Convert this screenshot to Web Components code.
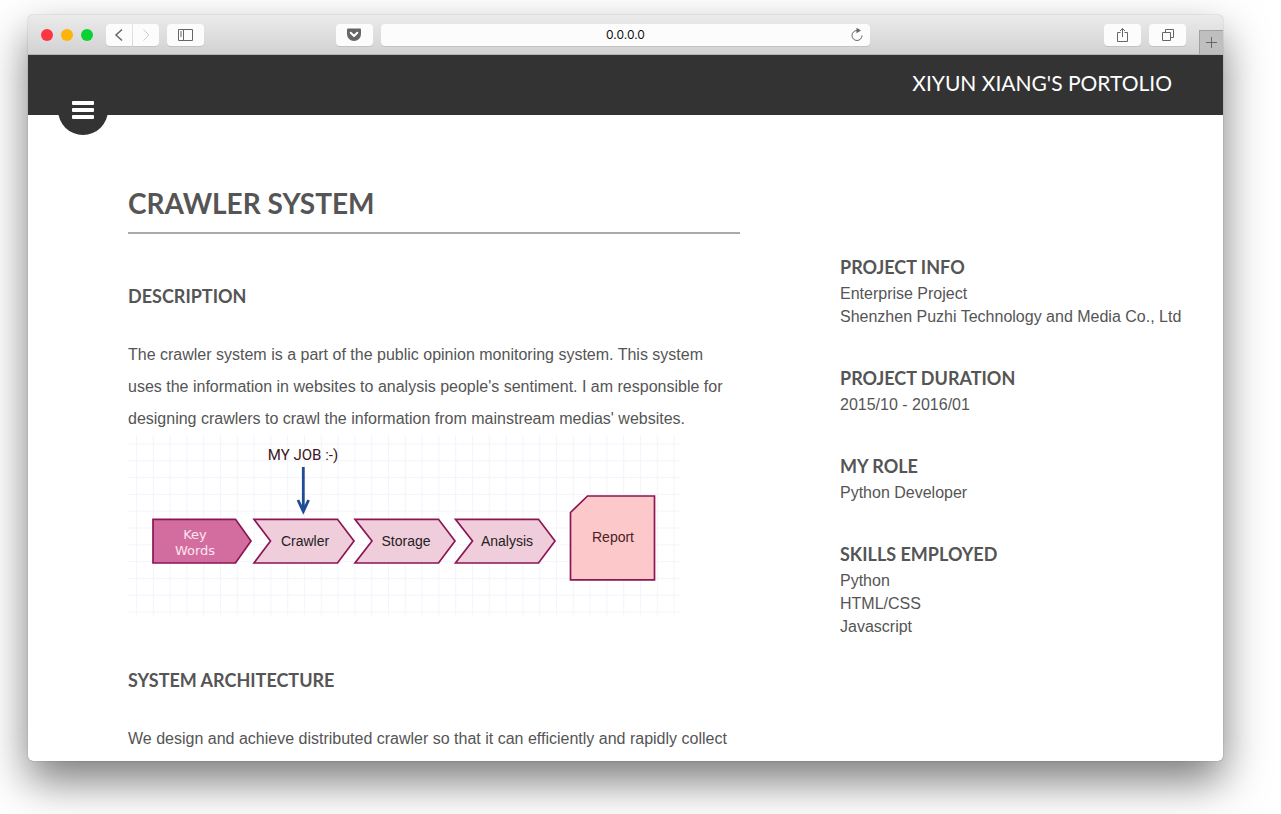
<!DOCTYPE html>
<html lang="en">
<head>
<meta charset="utf-8">
<title>Xiyun Xiang's Portolio</title>
<style>
  html, body { height: 100%; }
  body {
    margin: 0;
    background: #fff;
    color: #555;
    font: 16px/32px "Liberation Sans", Arial, sans-serif;
    overflow: hidden;
  }
</style>
</head>
<body>
<browser-window>
  <browser-toolbar slot="toolbar" address="0.0.0.0"></browser-toolbar>
  <site-header>XIYUN XIANG'S PORTOLIO</site-header>
  <project-page heading="CRAWLER SYSTEM">
    <article-section heading="DESCRIPTION">
      The crawler system is a part of the public opinion monitoring system. This system uses the information in websites to analysis people's sentiment. I am responsible for designing crawlers to crawl the information from mainstream medias' websites.
      <flow-diagram slot="figure"></flow-diagram>
    </article-section>
    <article-section heading="SYSTEM ARCHITECTURE">
      We design and achieve distributed crawler so that it can efficiently and rapidly collect
    </article-section>
    <info-group slot="aside" heading="PROJECT INFO"><div>Enterprise Project</div><div>Shenzhen Puzhi Technology and Media Co., Ltd</div></info-group>
    <info-group slot="aside" heading="PROJECT DURATION"><div>2015/10 - 2016/01</div></info-group>
    <info-group slot="aside" heading="MY ROLE"><div>Python Developer</div></info-group>
    <info-group slot="aside" heading="SKILLS EMPLOYED"><div>Python</div><div>HTML/CSS</div><div>Javascript</div></info-group>
  </project-page>
</browser-window>

<script>
class BaseElement extends HTMLElement {
  connectedCallback() {
    if (!this.shadowRoot) this.attachShadow({ mode: 'open' }).innerHTML = this.render();
  }
  attr(name) { return this.getAttribute(name) || ''; }
}

customElements.define('browser-window', class extends BaseElement {
  render() {
    return `<style>
      :host { display: flex; height: 100vh; box-sizing: border-box; padding: 15px 58px 53px 28px; }
      .frame { flex: 1; min-width: 0; display: flex; flex-direction: column; border-radius: 5px; background: #fff;
        box-shadow: 0 20px 44px rgba(0,0,0,.52), 0 0 1px rgba(0,0,0,.6); }
      .view { flex: 1; min-height: 0; overflow: hidden; border-radius: 0 0 5px 5px; }
    </style>
    <div class="frame"><slot name="toolbar"></slot><div class="view"><slot></slot></div></div>`;
  }
});

customElements.define('browser-toolbar', class extends BaseElement {
  render() {
    return `<style>
      :host { display: block; }
      .bar { display: grid; grid-template-columns: 1fr 41% 1fr; align-items: center; height: 40px; box-sizing: border-box;
        border-radius: 5px 5px 0 0; border-bottom: 1px solid #b4b4b4; background: linear-gradient(#ebebeb, #d2d2d2); }
      .left, .right, .lights, .nav { display: flex; align-items: center; }
      .left { padding: 0 8px 0 13px; }
      .lights { gap: 8px; margin-right: 13px; }
      .lights i { width: 12px; height: 12px; border-radius: 50%; }
      button { display: grid; place-items: center; width: 37px; height: 22px; padding: 0; border: 0; border-radius: 4px;
        background: #fcfcfc; box-shadow: 0 1px 0 #c2c2c2; }
      .nav { gap: 1px; margin-right: 8px; }
      .nav button { width: 26px; }
      .nav button:first-child { border-radius: 4px 0 0 4px; }
      .nav button:last-child { border-radius: 0 4px 4px 0; }
      .pocket { margin-left: auto; }
      .field { display: flex; position: relative; }
      input { width: 100%; height: 22px; box-sizing: border-box; padding: 0 26px; border: 0; border-radius: 4px; background: #fcfcfc;
        box-shadow: 0 1px 0 #c2c2c2; color: #111; text-align: center; font: 12px Inter, "Liberation Sans", sans-serif; }
      .field button { position: absolute; right: 0; top: 0; width: 26px; background: none; box-shadow: none; }
      .right { justify-content: flex-end; align-self: stretch; gap: 8px; }
      .right .add { align-self: flex-end; width: 24px; height: 24px; margin-left: 5px; border: 1px solid #a0a0a0; border-width: 1px 0 0 1px;
        border-radius: 0; background: #bfbfbf; box-shadow: none; }
      svg { display: block; fill: none; stroke: #666; }
    </style>
    <div class="bar">
      <div class="left">
        <div class="lights"><i style="background:#fc3543"></i><i style="background:#fdb40a"></i><i style="background:#0bd133"></i></div>
        <div class="nav">
          <button aria-label="Back"><svg width="10" height="14" viewBox="0 0 10 14" stroke-width="1.5"><path d="M8 1.500 2 7l6 5.500"/></svg></button>
          <button aria-label="Forward"><svg width="10" height="14" viewBox="0 0 10 14" style="stroke:#ccc"><path d="m2.500 1.500L8 7l-5.500 5.500"/></svg></button>
        </div>
        <button aria-label="Sidebar"><svg width="17" height="14" viewBox="0 0 17 14"><path d="M1.500 1.500h14v11h-14zM6.500 1.500v11M3 4h2M3 6h2M3 8h2"/></svg></button>
        <button class="pocket" aria-label="Pocket"><svg width="16" height="14" viewBox="0 0 16 14"><path d="M2 .5h12q1 0 1 1V6a7 7 0 0 1-14 0V1.500q0-1 1-1z" fill="#666" stroke="none"/><path d="M4.700 4.700 8 8l3.300-3.300" stroke="#fff" stroke-width="2" stroke-linecap="round" stroke-linejoin="round"/></svg></button>
      </div>
      <div class="field">
        <input type="text" aria-label="Address" value="${this.attr('address')}">
        <button aria-label="Reload"><svg width="14" height="16" viewBox="0 0 14 16"><path d="M8 3.500H7a5 5 0 1 0 5 5"/><path d="m6.500 .8 4.500 2.700-4.500 2.700z" fill="#666" stroke="none"/></svg></button>
      </div>
      <div class="right">
        <button aria-label="Share"><svg width="13" height="16" viewBox="0 0 13 16"><path d="M4.500 5.500h-3v9h10v-9h-3M6.500 10V1.500M4 4l2.500-2.500L9 4"/></svg></button>
        <button aria-label="Tabs"><svg width="14" height="14" viewBox="0 0 14 14"><path d="M1.500 4.500h8v8h-8zM4.500 4V1.500h8v8H10"/></svg></button>
        <button class="add" aria-label="New tab"><svg width="13" height="13" viewBox="0 0 13 13"><path d="M6.500 1v11M1 6.500h11"/></svg></button>
      </div>
    </div>`;
  }
});

customElements.define('site-header', class extends BaseElement {
  render() {
    return `<style>
      :host { display: block; position: relative; background: #333; }
      header { display: flex; align-items: center; justify-content: flex-end; height: 60px; padding: 0 51px 4px; box-sizing: border-box; }
      a { color: #fff; text-decoration: none; font: 21px/28px Lato, sans-serif; }
      button { position: absolute; left: 30px; bottom: -20px; width: 50px; height: 50px; display: grid; place-items: center;
        padding: 0; border: 0; border-radius: 50%; background: #333; }
      svg { display: block; }
    </style>
    <header>
      <button aria-label="Menu"><svg width="22" height="20" viewBox="0 0 22 20" fill="#fff"><rect y="1" width="22" height="4" rx="1"/><rect y="8" width="22" height="4" rx="1"/><rect y="15" width="22" height="4" rx="1"/></svg></button>
      <a href="#"><slot></slot></a>
    </header>`;
  }
});

customElements.define('project-page', class extends BaseElement {
  render() {
    return `<style>
      :host { display: grid; grid-template-columns: 612fr 355fr; column-gap: 100px; padding: 0 28px 0 100px; }
      main { min-width: 0; padding-top: 68px; }
      aside { display: flex; flex-direction: column; gap: 36px; padding-top: 138px; min-width: 0; }
      h1 { margin: 0; padding-bottom: 9px; border-bottom: 2px solid #aaa; font: 700 28px/40px Lato, sans-serif; }
    </style>
    <main><h1>${this.attr('heading')}</h1><slot></slot></main>
    <aside><slot name="aside"></slot></aside>`;
  }
});

customElements.define('article-section', class extends BaseElement {
  render() {
    return `<style>
      :host { display: block; padding-top: 50px; }
      h2 { margin: 0 0 31px; font: 700 18px/24px Lato, sans-serif; }
      p { margin: 0; }
    </style>
    <section><h2>${this.attr('heading')}</h2><p><slot></slot></p><slot name="figure"></slot></section>`;
  }
});

customElements.define('info-group', class extends BaseElement {
  render() {
    return `<style>
      :host { display: block; line-height: 23px; }
      h3 { margin: 0; font: 700 18px/29px Lato, sans-serif; }
    </style>
    <h3>${this.attr('heading')}</h3><slot></slot>`;
  }
});

customElements.define('flow-diagram', class extends BaseElement {
  render() {
    return `<style>
      :host { display: block; padding-bottom: 3px; }
      figure { margin: 0; }
      svg { display: block; max-width: 100%; }
      text { font: 14px "Liberation Sans", Arial, sans-serif; fill: #222; text-anchor: middle; }
    </style>
    <figure><svg width="552" height="180" viewBox="0 0 552 180" role="img" aria-label="Crawler pipeline">
      <defs><pattern id="grid" x="8" y="8.500" width="16.800" height="16.800" patternUnits="userSpaceOnUse"><path d="M.5 0v17M0 .5h17" stroke="#f3f4fc" fill="none"/></pattern></defs>
      <rect width="552" height="180" fill="url(#grid)"/>
      <g stroke="#8c1554" stroke-width="1.700">
        <path fill="#d36c9f" d="M25 84.300h82.500L123 106l-15.500 22H25z"/>
        <g fill="#efcddb">
          <path d="M126 84.300h83.500L226 106l-16.500 22H126l16.500-22z"/>
          <path d="M227 84.300h83.500L327 106l-16.500 22H227l17-22z"/>
          <path d="M327.500 84.300H410.500L427 106l-16.500 22h-83l17-22z"/>
        </g>
        <path fill="#fdc8ca" d="M459.500 61H526.500v83.800h-84V77.500z"/>
      </g>
      <path d="M175.300 32v44M170 65l5.300 11.500L180.600 65" fill="none" stroke="#1f4c94" stroke-width="2.800"/>
      <text x="175" y="25" style="font:15px Roboto,sans-serif;fill:#3b1624">MY JOB :-)</text>
      <text x="67" y="104" style="font:13px 'DejaVu Sans',sans-serif;fill:#fbe6f0">Key</text>
      <text x="67" y="120" style="font:13px 'DejaVu Sans',sans-serif;fill:#fbe6f0">Words</text>
      <text x="177" y="111">Crawler</text>
      <text x="278" y="111">Storage</text>
      <text x="379" y="111">Analysis</text>
      <text x="485" y="107" style="fill:#4a1d27">Report</text>
    </svg></figure>`;
  }
});
</script>
</body>
</html>
